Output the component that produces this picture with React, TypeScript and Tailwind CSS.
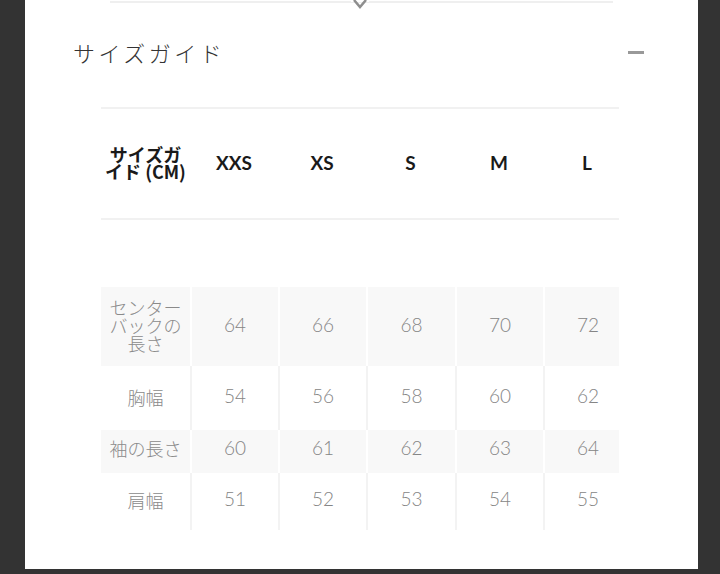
import React from "react";

const sizes = ["XXS", "XS", "S", "M", "L"];
const rows: { label: string; values: string[]; h: string; pb: string; shaded: boolean }[] = [
  { label: "センターバックの長さ", values: ["64", "66", "68", "70", "72"], h: "h-[79px]", pb: "pb-[3px]", shaded: true },
  { label: "胸幅", values: ["54", "56", "58", "60", "62"], h: "h-[64px]", pb: "pb-[3px]", shaded: false },
  { label: "袖の長さ", values: ["60", "61", "62", "63", "64"], h: "h-[43px]", pb: "pb-[7px]", shaded: true },
  { label: "肩幅", values: ["51", "52", "53", "54", "55"], h: "h-[57px]", pb: "pb-[4px]", shaded: false },
];

const jp = { fontFamily: '"Noto Sans CJK JP", "Noto Sans", sans-serif' };
const num = { fontFamily: 'Lato, "Noto Sans CJK JP", sans-serif' };

export default function App() {
  return (
    <div className="w-[720px] h-[574px] bg-[#333333] pl-[25px] pr-[22px] overflow-hidden">
      <div className="w-[673px] h-[569px] bg-white flex flex-col">
        {/* top divider with chevron */}
        <div className="relative h-[4px] mx-[85px]">
          <div className="absolute left-0 right-0 top-[1px] h-[2px] bg-[#efefef]" />
          <svg
            className="absolute left-[241px] top-[-2px]"
            width="18"
            height="14"
            viewBox="0 0 18 14"
          >
            <rect x="0" y="0" width="18" height="4" fill="white" />
            <polyline points="3,2 9,9 15,2" fill="none" stroke="#8e8e8e" strokeWidth="2.5" strokeLinejoin="miter" />
          </svg>
        </div>

        {/* title row */}
        <div className="mt-[32px] h-[32px] pl-[48px] pr-[54px] flex items-center justify-between">
          <span className="text-[22px] tracking-[3.5px] text-[#333333] font-light" style={jp}>
            サイズガイド
          </span>
          <div className="w-[16px] h-[3px] bg-[#999999]" />
        </div>

        {/* table */}
        <div className="ml-[76px] mt-[39px] w-[518px] overflow-hidden">
          <div className="w-[530px]">
            {/* header */}
            <div className="border-t-2 border-b-2 border-[#f1f1f1] h-[113px] grid grid-cols-[89px_88px_88px_89px_88px_88px] items-center">
              <div className="px-[3px] pb-[2px] text-center text-[18px] leading-[17px] font-bold text-[#1a1a1a]" style={jp}>
                サイズガイド (CM)
              </div>
              {sizes.map((s) => (
                <div key={s} className="text-center text-[19px] font-bold text-[#1a1a1a]" style={num}>
                  {s}
                </div>
              ))}
            </div>

            <div className="h-[67px]" />

            {rows.map((r) => (
              <div
                key={r.label}
                className={`grid grid-cols-[89px_88px_88px_89px_88px_88px] ${r.h} ${r.shaded ? "bg-[#f8f8f8]" : "bg-white"}`}
              >
                <div
                  className={`flex items-center justify-center px-[4px] ${r.pb} text-center text-[18px] leading-[18px] font-light text-[#8a8a8a]`}
                  style={jp}
                >
                  {r.label}
                </div>
                {r.values.map((v, i) => (
                  <div
                    key={i}
                    className={`flex items-center justify-center ${r.pb} border-l-2 text-[19px] text-[#858585] ${
                      r.shaded ? "border-white" : "border-[#f3f3f3]"
                    }`}
                    style={{ ...num, fontWeight: 300 }}
                  >
                    {v}
                  </div>
                ))}
              </div>
            ))}
          </div>
        </div>
      </div>
    </div>
  );
}
